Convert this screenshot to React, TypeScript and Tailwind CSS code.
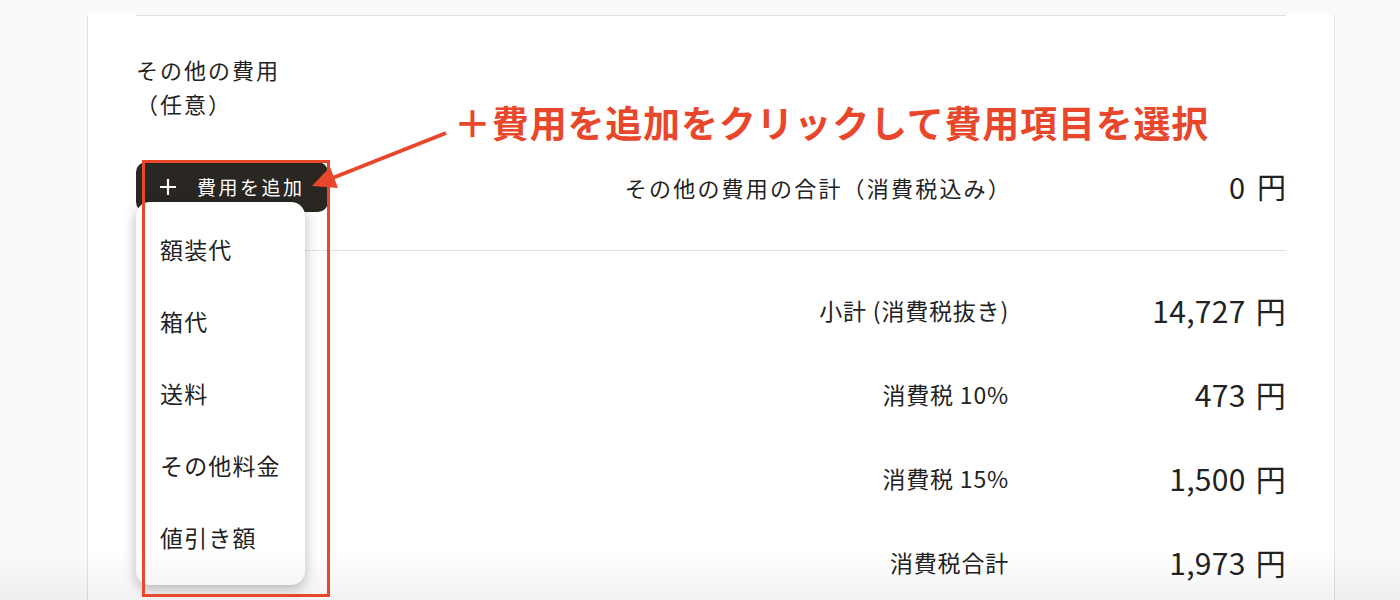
const menuItems = ['額装代', '箱代', '送料', 'その他料金', '値引き額'];

const totals = [
  { label: '小計 (消費税抜き)', value: '14,727' },
  { label: '消費税 10%', value: '473' },
  { label: '消費税 15%', value: '1,500' },
  { label: '消費税合計', value: '1,973' },
];

const jp = "font-['Noto_Sans_CJK_JP','Noto_Sans',sans-serif]";

export default function App() {
  return (
    <div className={`relative h-[600px] w-[1400px] overflow-hidden bg-[#fafaf9] text-[#222] ${jp}`}>
      <div className="ml-[87px] h-full w-[1248px] border-x border-[#e3e3e3] bg-white px-[48px]">
        <div className="mt-[15px] border-t border-[#e2e2e2]" />

        {/* Other costs */}
        <div className="pt-[36px] text-[22px] leading-[34px] tracking-[0.09em]">
          その他の費用
          <br />
          （任意）
        </div>

        <div className="mt-[42px] flex items-center">
          <button className="flex h-[50px] w-[192px] items-center rounded-[10px] bg-[#2a2622] pl-[23px] text-[19px] tracking-[0.13em] text-white">
            <svg width="18" height="18" viewBox="0 0 18 18" className="mr-[20px]">
              <path d="M9 1v16M1 9h16" stroke="white" strokeWidth="2.2" />
            </svg>
            費用を追加
          </button>
          <div className="flex-1 text-right text-[22px] tracking-[0.1em]">
            その他の費用の合計（消費税込み）
          </div>
          <div className="w-[274px] text-right text-[29px]">
            0<span className="ml-[12px]">円</span>
          </div>
        </div>

        <div className="mt-[38px] border-t border-[#e2e2e2]" />

        <div className="pt-[17px]">
          {totals.map((row) => (
            <div key={row.label} className="flex h-[84px] items-center">
              <div className="flex-1 text-right text-[23px] tracking-[0.035em]">{row.label}</div>
              <div className="w-[277px] text-right text-[30px] tracking-[0.01em]">
                {row.value}
                <span className="ml-[10px]">円</span>
              </div>
            </div>
          ))}
        </div>
      </div>

      {/* Dropdown menu */}
      <div className="absolute left-[136px] top-[202px] h-[383px] w-[169px] rounded-[14px] bg-white pt-[11px] shadow-[0_4px_14px_rgba(0,0,0,0.28)]">
        {menuItems.map((item) => (
          <div key={item} className="flex h-[72px] items-center pl-[24px] text-[23px] tracking-[0.05em]">
            {item}
          </div>
        ))}
      </div>

      {/* Bottom fade */}
      <div className="pointer-events-none absolute inset-x-0 bottom-0 h-[48px] bg-gradient-to-b from-transparent to-black/[0.05]" />

      {/* Annotation */}
      <div className="pointer-events-none absolute left-[142px] top-[160px] h-[437px] w-[188px] border-[3px] border-[#e8472c]" />
      <div className="absolute left-[454px] top-[96px] text-[37px] font-bold leading-[52px] tracking-[0.022em] text-[#e8472c]">
        ＋費用を追加をクリックして費用項目を選択
      </div>
      <svg className="pointer-events-none absolute left-0 top-0" width="1400" height="600">
        <line x1="446" y1="133" x2="330" y2="179" stroke="#e8472c" strokeWidth="4" />
        <polygon points="312,186 330,167 338,188" fill="#e8472c" />
      </svg>
    </div>
  );
}
